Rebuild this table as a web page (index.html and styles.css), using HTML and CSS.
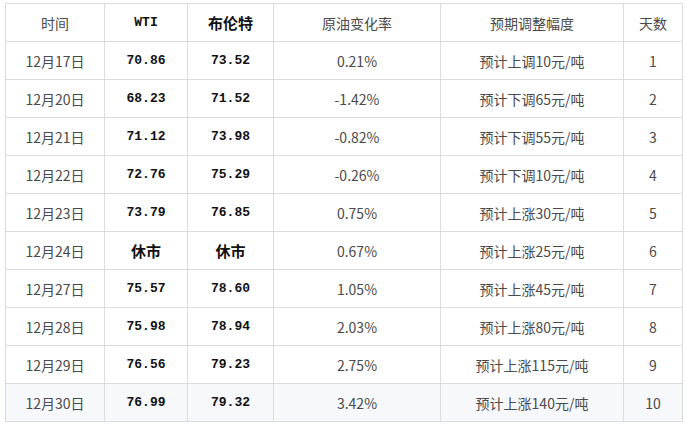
FILE: index.html
```html
<!DOCTYPE html>
<html lang="zh-CN">
<head>
<meta charset="utf-8">
<title>油价调整</title>
<link rel="stylesheet" href="styles.css">
</head>
<body>
<table class="oil">
  <colgroup>
    <col class="c-date"><col class="c-wti"><col class="c-brent"><col class="c-rate"><col class="c-adj"><col class="c-day">
  </colgroup>
  <thead>
    <tr><th>时间</th><th class="num">WTI</th><th class="bold">布伦特</th><th>原油变化率</th><th>预期调整幅度</th><th>天数</th></tr>
  </thead>
  <tbody>
    <tr><td>12月17日</td><td class="num">70.86</td><td class="num">73.52</td><td>0.21%</td><td>预计上调10元/吨</td><td>1</td></tr>
    <tr><td>12月20日</td><td class="num">68.23</td><td class="num">71.52</td><td>-1.42%</td><td>预计下调65元/吨</td><td>2</td></tr>
    <tr><td>12月21日</td><td class="num">71.12</td><td class="num">73.98</td><td>-0.82%</td><td>预计下调55元/吨</td><td>3</td></tr>
    <tr><td>12月22日</td><td class="num">72.76</td><td class="num">75.29</td><td>-0.26%</td><td>预计下调10元/吨</td><td>4</td></tr>
    <tr><td>12月23日</td><td class="num">73.79</td><td class="num">76.85</td><td>0.75%</td><td>预计上涨30元/吨</td><td>5</td></tr>
    <tr><td>12月24日</td><td class="bold">休市</td><td class="bold">休市</td><td>0.67%</td><td>预计上涨25元/吨</td><td>6</td></tr>
    <tr><td>12月27日</td><td class="num">75.57</td><td class="num">78.60</td><td>1.05%</td><td>预计上涨45元/吨</td><td>7</td></tr>
    <tr><td>12月28日</td><td class="num">75.98</td><td class="num">78.94</td><td>2.03%</td><td>预计上涨80元/吨</td><td>8</td></tr>
    <tr><td>12月29日</td><td class="num">76.56</td><td class="num">79.23</td><td>2.75%</td><td>预计上涨115元/吨</td><td>9</td></tr>
    <tr class="last"><td>12月30日</td><td class="num">76.99</td><td class="num">79.32</td><td>3.42%</td><td>预计上涨140元/吨</td><td>10</td></tr>
  </tbody>
</table>
</body>
</html>
```
FILE: styles.css
```css
html, body {
  margin: 0;
  background: #fff;
}
body {
  padding: 3px 5px 0 5px;
  font-family: "Noto Sans CJK SC", "Noto Sans", sans-serif;
  font-size: 14px;
  color: #4a4a4a;
}
.oil {
  border-collapse: collapse;
  table-layout: fixed;
  width: 678px;
}
.c-date { width: 99px; }
.c-wti { width: 83px; }
.c-brent { width: 86px; }
.c-rate { width: 167px; }
.c-adj { width: 183px; }
.c-day { width: 59px; }
.oil th,
.oil td {
  border: 1px solid #dcdcdc;
  height: 37px;
  padding: 0;
  text-align: center;
  vertical-align: middle;
  font-weight: normal;
  line-height: 20px;
  white-space: nowrap;
}
.oil .num {
  font-family: "Liberation Mono", "DejaVu Sans Mono", monospace;
  font-weight: bold;
  font-size: 13px;
  color: #111;
}
.oil .bold {
  font-weight: bold;
  font-size: 15px;
  color: #111;
}
.oil tr.last td {
  background: #f6f8fc;
}
```
